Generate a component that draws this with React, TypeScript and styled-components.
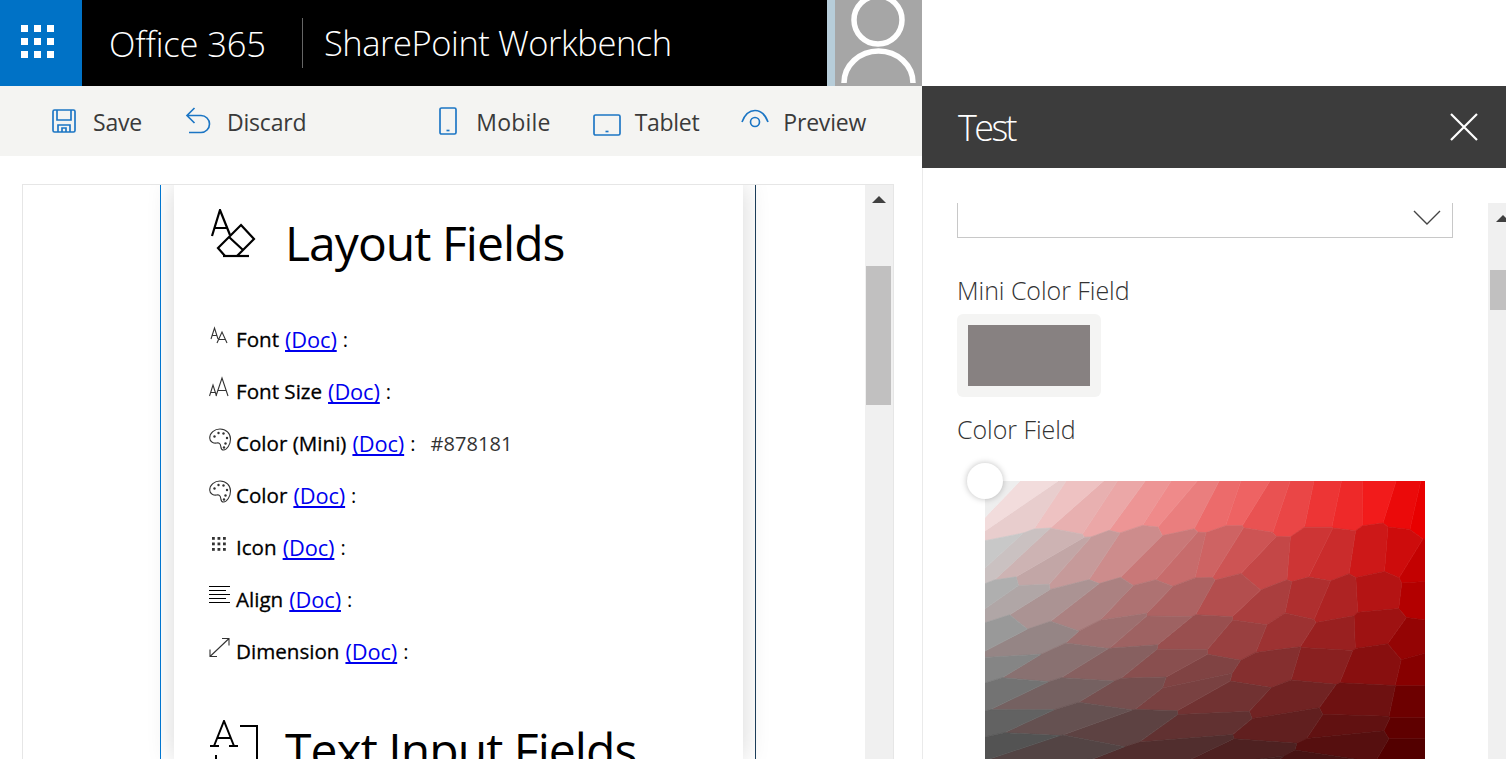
import React, { useMemo } from "react";
import styled, { createGlobalStyle } from "styled-components";

const GlobalStyle = createGlobalStyle`
  html, body {
    margin: 0;
    padding: 0;
    background: #fff;
    overflow: hidden;
  }
  * { box-sizing: border-box; }
`;

const Page = styled.div`
  width: 1506px;
  height: 759px;
  display: flex;
  overflow: hidden;
  font-family: "Open Sans", "Noto Sans", sans-serif;
  color: #333;
`;

const Main = styled.div`
  width: 922px;
  display: flex;
  flex-direction: column;
`;

const TopBar = styled.header`
  height: 86px;
  flex: none;
  background: #000;
  display: flex;
  align-items: center;
  color: #fff;
  font-weight: 300;
`;

const Waffle = styled.div`
  width: 82px;
  height: 86px;
  background: #0072c6;
  padding: 25px 0 0 21px;
`;

const Brand = styled.div`
  font-size: 34.5px;
  margin-left: 27px;
  width: 194px;
  height: 50px;
  line-height: 52px;
  letter-spacing: -0.15px;
  border-right: 1px solid #666;
  white-space: nowrap;
`;

const AppName = styled.div`
  font-size: 34.5px;
  margin-left: 21px;
  line-height: 52px;
  letter-spacing: -0.45px;
  white-space: nowrap;
  flex: 1;
`;

const Avatar = styled.div`
  width: 95px;
  height: 86px;
  background: #a6a6a6;
  border-left: 8px solid #b7cdd9;
  display: flex;
`;

const Toolbar = styled.nav`
  height: 70px;
  flex: none;
  background: #f4f4f2;
  display: flex;
  align-items: center;
  font-size: 23px;
  line-height: 34px;
  color: #3a3a3a;
`;

const Group = styled.div<{ $pad: number; $gap: number }>`
  display: flex;
  align-items: center;
  padding-left: ${(p) => p.$pad}px;
  gap: ${(p) => p.$gap}px;
`;

const ToolButton = styled.div<{ $gap: number; $spacing?: number }>`
  display: flex;
  align-items: center;
  gap: ${(p) => p.$gap}px;
  letter-spacing: ${(p) => p.$spacing ?? -0.2}px;
  white-space: nowrap;
`;

const ToolLabel = styled.span`
  padding-top: 2px;
`;

const ToolIcon = styled.svg<{ $shift?: number }>`
  margin-top: ${(p) => p.$shift ?? 0}px;
  fill: none;
  stroke: #1b75c4;
  stroke-width: 1.65;
`;

const Workspace = styled.div`
  flex: 1;
  min-height: 0;
  padding: 28px 28px 0 22px;
`;

const Frame = styled.div`
  height: 100%;
  border: 1px solid #e6e6e6;
  border-bottom: 0;
  display: flex;
  overflow: hidden;
`;

const Canvas = styled.div`
  flex: 1;
  padding-left: 137px;
  overflow: hidden;
`;

const Zone = styled.div`
  width: 596px;
  height: 100%;
  padding: 0 12px 0 13px;
  border-left: 1px solid #0078d4;
  border-right: 1px solid #1d3f5c;
`;

const Card = styled.article`
  height: 100%;
  background: #fff;
  padding: 26px 0 0 35px;
  box-shadow: 0 0 26px rgba(0, 0, 0, 0.16);
  color: #000;
`;

const Heading = styled.div<{ $top?: number }>`
  display: flex;
  align-items: center;
  height: 62px;
  gap: 26px;
  margin-top: ${(p) => p.$top ?? 0}px;
  font-size: 48px;
  font-weight: 400;
  letter-spacing: -0.95px;
  white-space: nowrap;
`;

const HeadingIcon = styled.div<{ $lift: number }>`
  width: 50px;
  height: 50px;
  flex: none;
  margin-top: ${(p) => p.$lift}px;
`;

const FieldList = styled.div`
  margin-top: 41px;
  display: flex;
  flex-direction: column;
`;

const Row = styled.div`
  height: 52px;
  display: flex;
  align-items: center;
  font-size: 20px;
  white-space: nowrap;
  position: relative;
  top: -1px;
`;

const RowIcon = styled.div`
  width: 27px;
  height: 26px;
  margin-top: -6px;
  flex: none;
`;

const Label = styled.span`
  font-size: 20.6px;
  letter-spacing: 0;
  -webkit-text-stroke: 0.3px #000;
  margin-right: 6px;
`;

const DocLink = styled.a`
  color: #0000ee;
  font-size: 21.8px;
  text-decoration: underline;
  text-decoration-skip-ink: none;
  letter-spacing: -0.1px;
  margin-right: 6px;
`;

const Value = styled.span`
  margin-left: 15px;
  color: #333;
  letter-spacing: 0.1px;
`;

const Track = styled.div`
  width: 28px;
  flex: none;
  background: #f0f0f0;
  position: relative;
`;

const Arrow = styled.div`
  position: absolute;
  top: 11px;
  left: 7px;
  width: 0;
  height: 0;
  border-left: 7px solid transparent;
  border-right: 7px solid transparent;
  border-bottom: 7px solid #404040;
`;

const Thumb = styled.div`
  position: absolute;
  top: 81px;
  left: 1px;
  width: 25px;
  height: 139px;
  background: #c1c0c0;
`;

const Panel = styled.aside`
  flex: 1;
  margin-top: 86px;
  display: flex;
  flex-direction: column;
  border-left: 1px solid #eaeaea;
`;

const PanelHeader = styled.div`
  height: 82px;
  flex: none;
  margin-left: -1px;
  background: #3c3c3c;
  color: #fff;
  display: flex;
  align-items: center;
  justify-content: space-between;
  padding: 0 28px 0 36px;
  font-size: 36px;
  font-weight: 300;
  letter-spacing: -2.6px;
`;

const PanelBody = styled.div`
  flex: 1;
  min-height: 0;
  margin-top: 35px;
  display: flex;
  justify-content: space-between;
  overflow: hidden;
`;

const PanelContent = styled.div`
  padding-left: 34px;
  font-size: 25px;
  font-weight: 300;
  color: #333;
`;

const Dropdown = styled.div`
  width: 496px;
  height: 35px;
  border: 1px solid #c8c8c8;
  border-top: 0;
  display: flex;
  justify-content: flex-end;
  padding: 7px 11px 0 0;
`;

const FieldLabel = styled.div<{ $top: number }>`
  margin-top: ${(p) => p.$top}px;
  height: 34px;
  line-height: 32px;
  letter-spacing: -0.05px;
  white-space: nowrap;
`;

const SwatchWrap = styled.div`
  width: 144px;
  height: 83px;
  margin-top: 6px;
  padding: 11px;
  background: #f4f4f3;
  border-radius: 6px;
`;

const Swatch = styled.div`
  width: 122px;
  height: 61px;
  background: #878181;
`;

const Picker = styled.div`
  position: relative;
  width: 440px;
  height: 400px;
  margin: 34px 0 0 28px;
`;

const PickerThumb = styled.div`
  position: absolute;
  left: -18px;
  top: -18px;
  width: 36px;
  height: 36px;
  border-radius: 50%;
  background: #fff;
  box-shadow: 0 0 6px rgba(0, 0, 0, 0.25);
`;

const PanelTrack = styled.div`
  width: 18px;
  flex: none;
  background: #f0f0f0;
  position: relative;
`;

const PanelArrow = styled.div`
  position: absolute;
  top: 12px;
  left: 8px;
  width: 0;
  height: 0;
  border-left: 7px solid transparent;
  border-right: 7px solid transparent;
  border-bottom: 7px solid #404040;
`;

const PanelThumb = styled.div`
  position: absolute;
  top: 67px;
  left: 2px;
  right: 0;
  height: 40px;
  background: #c1c0c0;
`;

const SaveIcon = () => (
  <ToolIcon width="26" height="26" viewBox="0 0 26 26">
    <path d="M2 3.500a1.500 1.500 0 0 1 1.500-1.500h19a1.500 1.500 0 0 1 1.500 1.500v19a1.500 1.500 0 0 1-1.500 1.500h-19a1.500 1.500 0 0 1-1.500-1.500z" />
    <path d="M6 2v10h14V2M7 24v-7h12v7M11 24v-4h4v4" />
  </ToolIcon>
);

const UndoIcon = () => (
  <ToolIcon width="26" height="30" viewBox="0 0 26 30">
    <path d="M9.500 2 2 9.500 9.500 17M2 9.500h14a8.500 8.500 0 0 1 0 17H4" />
  </ToolIcon>
);

const MobileIcon = () => (
  <ToolIcon width="18" height="28" viewBox="0 0 18 28">
    <rect x="1" y="1" width="16" height="26" rx="1.500" />
    <path d="M7.500 23.500h3" />
  </ToolIcon>
);

const TabletIcon = () => (
  <ToolIcon width="28" height="22" viewBox="0 0 28 22" $shift={7}>
    <rect x="1" y="1" width="26" height="20" rx="1.500" />
    <path d="M12.500 17.500h3" />
  </ToolIcon>
);

const EyeIcon = () => (
  <ToolIcon width="28" height="20" viewBox="0 0 28 20" $shift={-4}>
    <path d="M1 13C4 5 9 1.500 14 1.500S24 5 27 13" />
    <circle cx="14" cy="13" r="4.500" />
  </ToolIcon>
);

const LayoutIcon = () => (
  <svg width="50" height="50" viewBox="0 0 50 50" fill="none" stroke="#000" strokeWidth="2.200">
    <path d="M3 27 11 1l10 25M6 19h13" />
    <path d="M32 16 45 30 28 47H16l-7-8zM20 28l14 13" />
    <path d="M14 47h26" />
  </svg>
);

const TextFieldIcon = () => (
  <svg width="50" height="50" viewBox="0 0 50 50" fill="none" stroke="#000" strokeWidth="2">
    <path d="M1 26h9M20 26h9M5 26 15 1l10 25M8 18h14" />
    <path d="M31 6h17v44M7 35v15" />
  </svg>
);

const FontIcon = () => (
  <svg width="26" height="26" viewBox="0 0 26 26" fill="none" stroke="#333" strokeWidth="1.100">
    <path d="M2 16 5.500 5 9 16M3.300 12.500h4.400M8 20l5-11 5 11M9.700 16.500h6.600" />
  </svg>
);

const FontSizeIcon = () => (
  <svg width="26" height="26" viewBox="0 0 26 26" fill="none" stroke="#333" strokeWidth="1.100">
    <path d="M0.500 21 4 10l3.500 11M1.700 17.500h4.600M7 21l6-18 6 18M9 15.500h8" />
  </svg>
);

const PaletteIcon = () => (
  <svg width="26" height="26" viewBox="0 0 26 26" fill="none" stroke="#333" strokeWidth="1.100">
    <path d="M11 2c6 0 10.500 4.500 10.500 10S18 23 14.500 23c-2.500 0-2.500-2-2.800-4-.3-2.500-1.800-3.500-4-3C5 16.500.700 15 .700 11 .700 6 5.500 2 11 2z" />
    <g fill="#333" stroke="none">
      <circle cx="5.500" cy="9.500" r="1.200" />
      <circle cx="9.500" cy="6" r="1.200" />
      <circle cx="14.500" cy="6.500" r="1.200" />
      <circle cx="18" cy="11" r="1.200" />
      <circle cx="16.500" cy="16.500" r="1.200" />
      <circle cx="15" cy="20.500" r="1.200" />
    </g>
  </svg>
);

const IconGridIcon = () => (
  <svg width="26" height="26" viewBox="0 0 26 26" fill="#333">
    {[6, 11.5, 17].map((y) =>
      [3, 8.5, 14].map((x) => <rect key={`${x}-${y}`} x={x} y={y} width="2.800" height="2.800" />)
    )}
  </svg>
);

const AlignIcon = () => (
  <svg width="26" height="26" viewBox="0 0 26 26" fill="none" stroke="#000" strokeWidth="1">
    <path d="M0 3.500h21M0 7.500h17M0 11.500h21M0 15.500h17M0 19.500h21" />
  </svg>
);

const ResizeIcon = () => (
  <svg width="26" height="26" viewBox="0 0 26 26" fill="none" stroke="#333" strokeWidth="1.100">
    <path d="M1 21.500 20 3.500M13 3.500h7v7M1 14.500v7h7" />
  </svg>
);

// the reference is a quantised gif: each band is a palette colour, so the
// cells are a voronoi of (r, g) seeds, mapped back to saturation / value
const PICKER_W = 440;
const PICKER_H = 400;
const ROOT2 = Math.SQRT2;
const LEVELS = [0.95, 0.8, 0.7, 0.61, 0.53, 0.46, 0.39, 0.33, 0.27, 0.21, 0.15];

type Pt = [number, number];

const clip = (poly: Pt[], a: Pt, b: Pt): Pt[] => {
  const mx = (a[0] + b[0]) / 2;
  const my = (a[1] + b[1]) / 2;
  const nx = b[0] - a[0];
  const ny = b[1] - a[1];
  const side = (p: Pt) => (p[0] - mx) * nx + (p[1] - my) * ny;
  const out: Pt[] = [];
  poly.forEach((p, i) => {
    const q = poly[(i + 1) % poly.length];
    const sp = side(p);
    const sq = side(q);
    if (sp <= 0) out.push(p);
    if (sp < 0 !== sq < 0) {
      const t = sp / (sp - sq);
      out.push([p[0] + (q[0] - p[0]) * t, p[1] + (q[1] - p[1]) * t]);
    }
  });
  return out;
};

const buildCells = () => {
  let state = 11;
  const rand = () => {
    state = (state * 16807) % 2147483647;
    return state / 2147483647;
  };
  const seeds: Pt[] = [];
  LEVELS.forEach((r, level) => {
    const step = level < 2 ? 0.055 : 0.065;
    for (let g = 0; g < r - step / 2; g += step) {
      const sr = Math.min(1, r + (rand() - 0.5) * 0.045);
      const sg = Math.max(0, Math.min(sr, g + (rand() - 0.5) * 0.03));
      seeds.push([sr, sg * ROOT2]);
    }
    seeds.push([r, r * ROOT2]);
  });
  const domain: Pt[] = [
    [1, 0],
    [1, ROOT2],
    [0.1, 0.1 * ROOT2],
    [0.1, 0],
  ];
  return seeds.map((seed) => {
    let poly = domain;
    for (const other of seeds) {
      if (other !== seed && poly.length) poly = clip(poly, seed, other);
    }
    const points = poly
      .map(([r, g]) => {
        const x = PICKER_W * (1 - g / ROOT2 / r);
        const y = PICKER_H * (1 - r);
        return `${x.toFixed(1)},${y.toFixed(1)}`;
      })
      .join(" ");
    const red = Math.round(seed[0] * 250);
    const gb = Math.round((seed[1] / ROOT2) * 250);
    return { points, fill: `rgb(${red},${gb},${gb})` };
  });
};

const PickerArea = () => {
  const cells = useMemo(buildCells, []);
  return (
    <svg width={PICKER_W} height={PICKER_H} viewBox={`0 0 ${PICKER_W} ${PICKER_H}`}>
      {cells.map((c, i) => (
        <polygon key={i} points={c.points} fill={c.fill} stroke={c.fill} strokeWidth="0.6" />
      ))}
    </svg>
  );
};

const fields = [
  { icon: <FontIcon />, label: "Font" },
  { icon: <FontSizeIcon />, label: "Font Size" },
  { icon: <PaletteIcon />, label: "Color (Mini)", value: "#878181" },
  { icon: <PaletteIcon />, label: "Color" },
  { icon: <IconGridIcon />, label: "Icon" },
  { icon: <AlignIcon />, label: "Align" },
  { icon: <ResizeIcon />, label: "Dimension" },
];

const App: React.FC = () => (
  <Page>
    <GlobalStyle />
    <Main>
      <TopBar>
        <Waffle>
          <svg width="34" height="34" viewBox="0 0 34 34" fill="#fff">
            {[0, 13, 26].map((y) =>
              [0, 13, 26].map((x) => <rect key={`${x}-${y}`} x={x} y={y} width="7" height="7" />)
            )}
          </svg>
        </Waffle>
        <Brand>Office 365</Brand>
        <AppName>SharePoint Workbench</AppName>
        <Avatar>
          <svg width="87" height="86" viewBox="0 0 87 86" fill="none" stroke="#fff" strokeWidth="5.500">
            <circle cx="43" cy="20" r="24" />
            <path d="M9 83a34.500 32 0 0 1 69 0" />
          </svg>
        </Avatar>
      </TopBar>
      <Toolbar>
        <Group $pad={51} $gap={43}>
          <ToolButton $gap={16}>
            <SaveIcon />
            <ToolLabel>Save</ToolLabel>
          </ToolButton>
          <ToolButton $gap={16}>
            <UndoIcon />
            <ToolLabel>Discard</ToolLabel>
          </ToolButton>
        </Group>
        <Group $pad={133} $gap={42}>
          <ToolButton $gap={19} $spacing={0.2}>
            <MobileIcon />
            <ToolLabel>Mobile</ToolLabel>
          </ToolButton>
          <ToolButton $gap={14} $spacing={-0.3}>
            <TabletIcon />
            <ToolLabel>Tablet</ToolLabel>
          </ToolButton>
          <ToolButton $gap={14}>
            <EyeIcon />
            <ToolLabel>Preview</ToolLabel>
          </ToolButton>
        </Group>
      </Toolbar>
      <Workspace>
        <Frame>
          <Canvas>
            <Zone>
              <Card>
                <Heading>
                  <HeadingIcon $lift={-18}>
                    <LayoutIcon />
                  </HeadingIcon>
                  Layout Fields
                </Heading>
                <FieldList>
                  {fields.map((f) => (
                    <Row key={f.label}>
                      <RowIcon>{f.icon}</RowIcon>
                      <Label>{f.label}</Label>
                      <DocLink href="#">(Doc)</DocLink>:
                      {f.value && <Value>{f.value}</Value>}
                    </Row>
                  ))}
                </FieldList>
                <Heading $top={40}>
                  <HeadingIcon $lift={-10}>
                    <TextFieldIcon />
                  </HeadingIcon>
                  Text Input Fields
                </Heading>
              </Card>
            </Zone>
          </Canvas>
          <Track>
            <Arrow />
            <Thumb />
          </Track>
        </Frame>
      </Workspace>
    </Main>
    <Panel>
      <PanelHeader>
        Test
        <svg width="28" height="28" viewBox="0 0 28 28" stroke="#fff" strokeWidth="2.200">
          <path d="M1 1l26 26M27 1 1 27" />
        </svg>
      </PanelHeader>
      <PanelBody>
        <PanelContent>
          <Dropdown>
            <svg width="28" height="16" viewBox="0 0 28 16" fill="none" stroke="#444" strokeWidth="1.400">
              <path d="M1 1l13 13L27 1" />
            </svg>
          </Dropdown>
          <FieldLabel $top={36}>Mini Color Field</FieldLabel>
          <SwatchWrap>
            <Swatch />
          </SwatchWrap>
          <FieldLabel $top={16}>Color Field</FieldLabel>
          <Picker>
            <PickerArea />
            <PickerThumb />
          </Picker>
        </PanelContent>
        <PanelTrack>
          <PanelArrow />
          <PanelThumb />
        </PanelTrack>
      </PanelBody>
    </Panel>
  </Page>
);

export default App;
